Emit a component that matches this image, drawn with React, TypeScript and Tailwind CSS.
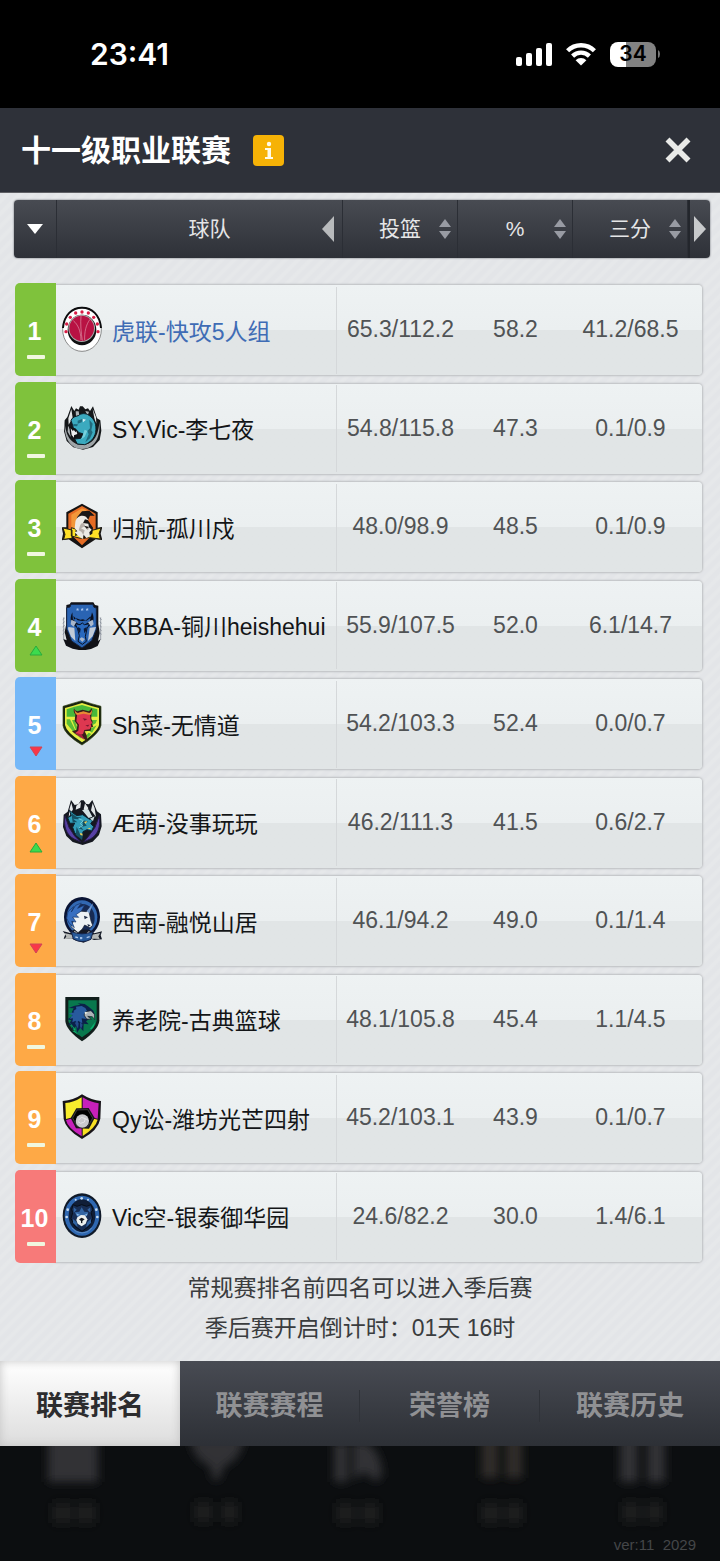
import type { ReactNode } from "react";

type Trend = "same" | "up" | "down";

interface Team {
  rank: number;
  name: string;
  shots: string;
  percent: string;
  threes: string;
  trend: Trend;
  zone: string;
  nameColor: string;
  logo: ReactNode;
}

const green = "bg-[#7fc23c]";
const blue = "bg-[#75b8f8]";
const orange = "bg-[#fea946]";
const red = "bg-[#f77a79]";
const plain = "text-[#131517]";

const basketballLogo = (
  <>
    <ellipse cx="60" cy="70" rx="58" ry="66" fill="#fff" stroke="#555" strokeWidth="2" />
    <path d="M3 66C6 26 31 5 60 5s54 21 57 61" fill="none" stroke="#0c0c0e" strokeWidth="6" />
    <ellipse cx="60" cy="72" rx="43" ry="46" fill="#101012" />
    <ellipse cx="59" cy="67" rx="40" ry="41" fill="#aaa" />
    <ellipse cx="59" cy="67" rx="37" ry="38" fill="#b81243" />
    <g fill="none" stroke="#e095aa" strokeWidth="2">
      <path d="M57 29c-2 24 0 50 4 75M34 44c14 12 22 30 23 58M84 40c-12 16-17 38-16 62" />
    </g>
    <g fill="#d81d45">
      <circle cx="60" cy="18" r="5" /><circle cx="41" cy="21" r="5" /><circle cx="79" cy="21" r="5" />
      <circle cx="25" cy="34" r="5" /><circle cx="95" cy="34" r="5" /><circle cx="14" cy="54" r="5" />
      <circle cx="106" cy="54" r="5" /><circle cx="12" cy="77" r="5" /><circle cx="108" cy="77" r="5" />
    </g>
  </>
);

const dinosaurLogo = (
  <>
    <path d="M28 3 37 18 42 10 50 14 54 4l8 0 8 9 8-3 6 8 9-14 12 36 10 6 3 31-5 28-20 21-30 8-29-7-20-19-8-29 2-33 8-10z" fill="#141719" />
    <path d="M28 12 32 38 20 59 19 40zM92 12l5 28 6 16-1-20z" fill="#e3e6e7" />
    <path d="M8 50c-3 38 10 80 52 82 44-2 56-44 52-82-2 34-13 68-52 70-36-2-50-34-52-70z" fill="#9fa5a8" />
    <path d="M41 19h9l2 12-10 3zM70 18l11 2-4 12zM18 62l6 11 2 23-9-16z" fill="#aeb4b7" />
    <path d="M27 46c4-10 14-12 22-14 8-8 22-8 32-1 16 10 24 28 20 51-4 19-18 32-33 37l-22-2-8-15 18-2 8-13-12-4-18 4-8-13 8-6z" fill="#3baabf" stroke="#0d1c24" strokeWidth="3" />
    <path d="m22 66 18 4 10 10-2 16-16 6-8-18z" fill="#101214" />
    <path d="m26 70 7 9 2-5 6 8 2-4 3 9-10 4 0 7-7-8z" fill="#eee" />
    <path d="m47 47 15-6-3 11-12 4zM82 44l10 12-4 20 4 6-8 18-14 12 10-24-4-10 8-8zM35 57l13 1-3 6-13-1z" fill="#216a7d" />
    <path d="m62 41 10 3-9 8z" fill="#d5eef2" />
    <path d="m68 74 8 4-8 17-10 8z" fill="#77d0dc" />
  </>
);

const warriorLogo = (
  <>
    <path d="M60 2 107 28v46l14-2-5 20 5 19-20-2-41 27-40-27-21 3 4-20-4-19h14V28z" fill="#151313" />
    <path d="M60 9 101 32v54L60 127 19 87V32z" fill="#e66c24" />
    <path d="M60 16 28 35v46l9 18 4-39 11-25 23-13z" fill="#f29739" />
    <path d="m3 75 27 6v25l-25 3 4-15zM117 75l-27 7-18 4-19-4-25-8v25l27 7 28-2 32 4-4-16z" fill="#ffe026" stroke="#242013" strokeWidth="3" />
    <path d="m45 43 15-18 22-2 16 15-14 0-6 14 15 22-2 18-15 9-9 6-11-13-17 5 3-27z" fill="#191717" />
    <path d="M40 57c2-15 18-24 32-16l8 11-11-3-6 11 16 2 2 11 8 7-7 8 2 12-11 5-8-10-3 13-13-9-11-11 8-3-8-9z" fill="#eceae5" />
    <path d="m57 62 8-3 4 10-12 7 11 6-4 14-6-10-8-4 4-14zM73 73l9 4-7 5z" fill="#b6afa9" />
    <path d="m66 68 16 4-8 5z" fill="#1b1715" />
  </>
);

const bullLogo = (
  <>
    <path d="M27 1h67l5 8 10 2v55l4 27-5 24 8-6-9 21-20 9-27 5-28-6-20-9-8-20 10 4-6-25 5-24V9l10-2z" fill="#101116" />
    <path d="M27 7h65l4 9 7 2v64L89 116l-29 22-31-21-15-36V17l10-2z" fill="#2a64b3" stroke="#14213b" strokeWidth="3" />
    <path d="m19 75 18 2 3 40-13-13-9-23zM102 75l-19 2-5 40 14-14 8-22z" fill="#c2cbd7" />
    <path d="M31 31c-10 21-5 37 14 45l5-9-13-10-3-15 13 13 14 2 11-2 14-12-2 15-14 9 5 9c19-9 25-24 15-45l-4 16-12 9-11-4-8 1-12-4-10 5z" fill="#090f1e" />
    <path d="m39 65 15 3 7-5 6 5 16-3-8 15-5 23 3 15-12 9-13-9 4-17-5-20z" fill="#2969be" stroke="#071226" strokeWidth="3" />
    <path d="m28 53 15 7-8 14-9-7zM92 53l-14 8 9 13 8-7zM52 111l7-5 10 5-8 9z" fill="#a9b7cb" />
    <path d="m49 75 7 5-2 14-7-10zM74 75l-9 5 2 14 7-10z" fill="#0b1936" />
    <g fill="#a7c4ee"><path d="m43 20 3 0 1-3 1 3h3l-2 3 1 4-3-2-3 2 0-4zM57 20h3l1-3 1 3h3l-2 3 1 4-3-2-3 2zM72 20h3l1-3 1 3h3l-2 3 1 4-3-2-3 2z" /></g>
    <path d="M5 46v69M116 46v68M2 53l6-5M2 64l6-5M2 75l6-5M2 86l6-5M2 97l6-5M119 53l-6-5M119 64l-6-5M119 75l-6-5M119 86l-6-5M119 97l-6-5" stroke="#777f8b" strokeWidth="2" />
  </>
);

const devilLogo = (
  <>
    <path d="M3 19Q34 9 60 2q27 9 57 17v57q-4 25-57 59Q7 103 3 77z" fill="#18240f" stroke="#34441b" strokeWidth="2" />
    <path d="M9 24Q36 17 60 9q26 9 51 15v51q-4 20-51 52Q13 97 9 75z" fill="#e6ed42" />
    <path d="M14 28Q38 19 60 15q22 6 46 13v22H14z" fill="#47b83a" />
    <path d="M14 58l10 0 24 50-8-5-26-32zM30 60l8 0 20 56-8-6zM90 60l15 0-4 10-14 8zM104 76 90 98 78 90zM80 98l8 4-14 14-6-4z" fill="#59bc36" />
    <path d="M36 25q-3 12 4 18l-2 20 8 12-2 14-14 5q12 12 28 14l18 18-2-20-6-12 18-2 2-10 6-2-4-8 2-6-4-10 0-14q6-8 0-18-2 8-8 10l-18-5-16 5q-8-2-10-9z" fill="#3b1e1a" />
    <path d="M46 40q22-10 38 4l2 16 5 9-5 4 2 6-5 9-16 2-4 12-10 4-14-6 10-8 2-18-8-10z" fill="#de3750" />
    <path d="M38 28q2 10 10 11l16-5 18 5q6-2 7-10 3 10-4 16l-20-4-20 4q-8-5-7-17z" fill="#e88b34" />
    <path d="m62 55 14 2-8 5zM70 76l12-2-4 6z" fill="#7c1830" />
    <path d="m42 98 18 6 8 16-22-14z" fill="#a41f3d" />
  </>
);

const dragonLogo = (
  <>
    <path d="m27 3 11 15 11-2 8-12h8l8 11 8 1 10-13 14 34 12 9 2 36-8 26-19 20-30 10-30-9-19-18-10-27 2-37 12-9z" fill="#151820" />
    <path d="m28 11 5 20-13 24 3-27zM92 12l-5 22 15 20-4-26zM43 20l14-11-2 17-14 6zM69 13l10 14-5 13-9-9z" fill="#e5e8ea" />
    <path d="M9 50c-5 34 4 57 27 70l20 9-18-18-17-26zM112 50c5 34-5 58-27 70l-20 9 15-18 19-26z" fill="#5740a4" stroke="#231b42" strokeWidth="3" />
    <path d="m22 34 22 16 18-3 19 13 12 4-7 10 9 9-6 13-14-4-12 6-3 16-13-2-9-11-6-16 6-13-14 1-7-17 11-6z" fill="#319db8" stroke="#0a2431" strokeWidth="3" />
    <path d="m60 33 20 24 11-4-12-22zM84 59l14-7-5 14z" fill="#d3e1e3" />
    <path d="m28 42 16 12 15 1-11 6-15-2 13 11-14-1zM60 64l19 3-11 4 6 9-17 4 8 10-15-6 13-12zM44 83l9 20 10 5-3 15-19-16z" fill="#155164" />
    <path d="m66 69 10-3-5 8zM53 102l9 2-1 6-6-3 6 14M75 89l9-3 2 4z" fill="#f0ce55" />
    <path d="m50 59 14 6-9 9 7 6-11 6" fill="none" stroke="#75ced9" strokeWidth="3" />
  </>
);

const unicornLogo = (
  <>
    <ellipse cx="60" cy="60" rx="54" ry="60" fill="#0a1434" />
    <ellipse cx="60" cy="61" rx="46" ry="51" fill="#3268b2" />
    <ellipse cx="61" cy="63" rx="37" ry="42" fill="#172a54" />
    <path d="M2 102 24 108 37 97l46 1 14 11 23-6-4 12 4 12-24 2-9-4-22 12-26-7-11-6-23 1 5-13z" fill="#141925" />
    <path d="m6 108 24 5 8-12 9 8-8 16-16-1-15 3 5-9zM115 108l-25 5-9-11-9 8 10 16 16-1 15 1-4-8z" fill="#b6b9b7" />
    <path d="m51 42 22 2 11-8-2 13 5 23 5 13-8 7-16-8-7 12-13 11-21-18 7-16-3-17z" fill="#eef2f5" stroke="#151d2c" strokeWidth="2" />
    <path d="m18 44 17-15-7 16 13-20 17-7-11 16 21-10-10 18-16 11 8 8-18-1 10 15-13-2 8 19-15-13-8-15z" fill="#386fc1" stroke="#173365" strokeWidth="2" />
    <path d="m74 43 20-26-12 32z" fill="#7599cc" />
    <path d="m66 56 12 5-10 6zM76 81l10 4-7 4z" fill="#202c46" />
    <path d="M28 104q31 13 65 0l-6 23q-27 14-53-1z" fill="#275999" stroke="#152449" strokeWidth="3" />
    <path d="m40 120 8 2M57 120v7M54 123h7M74 122l9-3" stroke="#adc9ed" strokeWidth="4" />
  </>
);

const eagleLogo = (
  <>
    <path d="M10 3h102v71Q109 102 60 136 12 102 10 75z" fill="#101e1b" />
    <path d="M19 13h85v61Q101 97 60 124 21 97 19 74z" fill="#08784d" />
    <path d="m30 47 5-10-15-1 18-7 17-3-8-4 21 2 12 8 14 12 5 13-10-3-14 2 11 10-14 10 8 9-15-2-1 23-9-11-10 15-2-20-13 12 1-16-13 2 10-15-12-3 14-8z" fill="#0b2149" />
    <path d="m34 45 9-6-1-7 17-2 11 6 7 12-11 9 7 12-14-2 2 15-13-8-4 16-3-16-10 5 2-12-10 1 9-11-12-4 17-4z" fill="#285a9e" />
    <path d="m72 47 15-3 10 11 1 16-7-9-14-1 11 9-14-1-8-12z" fill="#aeb4b8" stroke="#172026" strokeWidth="2" />
    <path d="m68 47 10 3-9 5z" fill="#f0efe1" />
    <path d="m39 82 5-8 6 8-2 16zM54 77l8 9-5 14-3-9z" fill="#244b8a" />
    <path d="m22 77 17 28-9-1 21 14-16-17 6 1zM100 77 84 99l6 0-17 18 22-24z" fill="#0ab16d" />
  </>
);

const quarteredLogo = (
  <>
    <path d="M60 1q28 18 57 20l-2 53q-6 34-55 61Q11 107 5 75L2 21Q35 19 60 1z" fill="#171318" />
    <path d="M59 10v53L12 75 10 27q25-1 49-17z" fill="#f8ed2d" />
    <path d="M62 10q24 15 48 18l-3 46-45-11zM12 78l47-12v61Q16 101 12 78z" fill="#c720ba" />
    <path d="m62 66 45 11q-6 24-45 49z" fill="#f8df22" />
    <path d="m43 43 37-1 18 30-17 32-39-1-16-31z" fill="#171719" />
    <path d="m45 48 32-1 15 25-15 26-31-1-14-25z" fill="#000" stroke="#534e52" strokeWidth="2" />
    <circle cx="61" cy="81" r="20" fill="#c9c9cc" />
    <path d="m49 79 9-9 12 4-3 10-11 4-8-5m22-9 9 5" fill="none" stroke="#e6e5e9" strokeWidth="3" />
  </>
);

const bearLogo = (
  <>
    <ellipse cx="60" cy="68" rx="58" ry="67" fill="#101a29" />
    <ellipse cx="60" cy="68" rx="52" ry="60" fill="#2e67b1" />
    <ellipse cx="60" cy="68" rx="40" ry="49" fill="#101e38" />
    <path d="m29 50 4-15 12 5 14-5 15 5 13-5 6 16-6 7 5 18-11 24-21 15-21-15-12-23 5-18z" fill="#172d54" stroke="#070e19" strokeWidth="3" />
    <path d="m35 43 9 7-9 9zM85 43l-9 7 9 9zM59 43l8 13 12 2-7 13-13 4-13-4-8-13 14-2zM33 78l11 10 3 14-14-12zM87 78l-11 10-4 14 15-12z" fill="#3264a3" />
    <path d="m46 73 11-7 12 1 7 12-5 13-12 8-12-8-4-11z" fill="#edf0ef" />
    <path d="m51 79 8-5 9 5-7 5v7l-4-1v-6z" fill="#151a23" />
    <path d="m43 61 11 5-9 2zM77 61l-10 5 8 2z" fill="#83b6e8" />
    <g fill="#c6ddf4"><circle cx="59" cy="16" r="4" /><circle cx="41" cy="20" r="3" /><circle cx="78" cy="20" r="3" /><circle cx="17" cy="50" r="4" /><circle cx="103" cy="50" r="4" /><circle cx="14" cy="72" r="4" /><circle cx="106" cy="72" r="4" /></g>
    <path d="m29 104 14 12 17 4 18-4 12-12" fill="none" stroke="#608fc5" strokeWidth="3" />
  </>
);

const teams: Team[] = [
  { rank: 1, name: "虎联-快攻5人组", shots: "65.3/112.2", percent: "58.2", threes: "41.2/68.5", trend: "same", zone: green, nameColor: "text-[#3f6cb5]", logo: basketballLogo },
  { rank: 2, name: "SY.Vic-李七夜", shots: "54.8/115.8", percent: "47.3", threes: "0.1/0.9", trend: "same", zone: green, nameColor: plain, logo: dinosaurLogo },
  { rank: 3, name: "归航-孤川戍", shots: "48.0/98.9", percent: "48.5", threes: "0.1/0.9", trend: "same", zone: green, nameColor: plain, logo: warriorLogo },
  { rank: 4, name: "XBBA-铜川heishehui", shots: "55.9/107.5", percent: "52.0", threes: "6.1/14.7", trend: "up", zone: green, nameColor: plain, logo: bullLogo },
  { rank: 5, name: "Sh菜-无情道", shots: "54.2/103.3", percent: "52.4", threes: "0.0/0.7", trend: "down", zone: blue, nameColor: plain, logo: devilLogo },
  { rank: 6, name: "Æ萌-没事玩玩", shots: "46.2/111.3", percent: "41.5", threes: "0.6/2.7", trend: "up", zone: orange, nameColor: plain, logo: dragonLogo },
  { rank: 7, name: "西南-融悦山居", shots: "46.1/94.2", percent: "49.0", threes: "0.1/1.4", trend: "down", zone: orange, nameColor: plain, logo: unicornLogo },
  { rank: 8, name: "养老院-古典篮球", shots: "48.1/105.8", percent: "45.4", threes: "1.1/4.5", trend: "same", zone: orange, nameColor: plain, logo: eagleLogo },
  { rank: 9, name: "Qy讼-潍坊光芒四射", shots: "45.2/103.1", percent: "43.9", threes: "0.1/0.7", trend: "same", zone: orange, nameColor: plain, logo: quarteredLogo },
  { rank: 10, name: "Vic空-银泰御华园", shots: "24.6/82.2", percent: "30.0", threes: "1.4/6.1", trend: "same", zone: red, nameColor: plain, logo: bearLogo },
];

function StatusBar() {
  return (
    <div className="flex h-[108px] items-center justify-between bg-black pr-[60px] pl-[90px] font-['Inter',sans-serif] text-white">
      <span className="text-[30px] leading-8 font-semibold">23:41</span>
      <div className="flex items-center">
        <svg className="h-6 w-9" viewBox="0 0 36 24" fill="currentColor" aria-hidden="true">
          <rect x="0" y="15" width="6" height="9" rx="2" />
          <rect x="10" y="11" width="6" height="13" rx="2" />
          <rect x="20" y="6" width="6" height="18" rx="2" />
          <rect x="30" y="1" width="6" height="23" rx="2" />
        </svg>
        <svg className="ml-3.5 h-6 w-[30px]" viewBox="0 0 30 24" aria-hidden="true">
          <path d="M1.6 8.8a19 19 0 0 1 26.8 0M6.6 14.1a12 12 0 0 1 16.8 0" fill="none" stroke="currentColor" strokeWidth="4.4" />
          <path d="M15 23.6 9.6 18.2a7.6 7.6 0 0 1 10.8 0z" fill="currentColor" />
        </svg>
        <span className="ml-3.5 flex h-[25px] w-[46px] items-center justify-center rounded-lg bg-linear-to-r from-white from-35% to-[#828282] to-35% text-[21px] leading-6 font-semibold text-black">34</span>
        <svg className="ml-0.5 h-2 w-0.5" viewBox="0 0 2 8" aria-hidden="true"><path d="M0 0q2 1 2 4T0 8z" fill="#777" /></svg>
      </div>
    </div>
  );
}

function TitleBar() {
  return (
    <header className="flex h-[85px] items-center border-b border-[#5f6065] bg-[#2e3139] pr-7 pl-[21px]">
      <h1 className="pt-px text-[30px] leading-10 font-bold text-white">十一级职业联赛</h1>
      <button type="button" aria-label="联赛说明" className="ml-[22px] flex size-[31px] items-center justify-center rounded-[4px] bg-[#f6b206]">
        <svg className="h-[19px] w-3" viewBox="0 0 12 19" fill="#fffbe8" aria-hidden="true">
          <circle cx="6" cy="3" r="2.2" />
          <path d="M2 7h6v9h2v2H2v-2h2.5V9H2z" />
        </svg>
      </button>
      <button type="button" aria-label="关闭" className="ml-auto">
        <svg className="size-7" viewBox="0 0 28 28" aria-hidden="true">
          <path d="M3.5 3.5 24.5 24.5M24.5 3.5 3.5 24.5" stroke="#e9eae8" strokeWidth="5.6" />
        </svg>
      </button>
    </header>
  );
}

function SortHeader({ label }: { label: string }) {
  return (
    <th scope="col" className="h-full w-[115px] border-r border-[#2b2e35] font-normal">
      <button type="button" className="flex size-full items-center justify-end pr-1.5">
        <span className="flex-1 pl-[18px] text-center">{label}</span>
        <svg className="h-5 w-3" viewBox="0 0 12 20" fill="#989ba3" aria-hidden="true">
          <path d="M6 0 12 8H0zM0 12h12l-6 8z" />
        </svg>
      </button>
    </th>
  );
}

function TrendMark({ trend }: { trend: Trend }) {
  if (trend === "same") {
    return <svg role="img" aria-label="持平" className="h-5 w-5" viewBox="0 0 20 20"><rect x="1" y="10" width="18" height="4" rx="1" fill="#f0f7df" /></svg>;
  }
  if (trend === "up") {
    return <svg role="img" aria-label="上升" className="h-5 w-5" viewBox="0 0 20 20"><path d="M10 5 16 14H4z" fill="#3ddb4e" stroke="#2aaa3c" strokeWidth="1" /></svg>;
  }
  return <svg role="img" aria-label="下降" className="h-5 w-5" viewBox="0 0 20 20"><path d="M4 8h12l-6 9z" fill="#fa3648" stroke="#cf4656" strokeWidth="1" /></svg>;
}

function TeamRow({ team }: { team: Team }) {
  return (
    <tr className="flex h-[93px] items-stretch">
      <td className={`z-10 flex w-[41px] shrink-0 flex-col items-center rounded-l-[5px] pt-[34px] text-[25px] leading-7 font-bold text-white ${team.zone}`}>
        <span className="pr-0.5">{team.rank}</span>
        <TrendMark trend={team.trend} />
      </td>
      <td className="mt-[2px] mb-px min-w-0 flex-1 rounded-r-[4px] bg-linear-to-b from-[#eef2f3] via-[#ebeff0] via-50% to-[#e1e5e6] to-50% p-0 shadow-[0_0_2px_1px_#bcbec1]">
        <div className="flex h-full items-center">
          <div className="flex h-[87px] min-w-0 flex-1 items-center border-r border-[#d5d8da] pl-1.5">
            <svg className="h-12 w-10 shrink-0" viewBox="0 0 120 144" aria-hidden="true">{team.logo}</svg>
            <span className={`ml-2.5 whitespace-nowrap pt-[3px] text-[23px] leading-8 ${team.nameColor}`}>{team.name}</span>
          </div>
          <div className="flex pr-[14px] pb-0.5 pl-1.5 text-center text-[23px] leading-8 text-[#505355]">
            <span className="w-[115px]">{team.shots}</span>
            <span className="w-[115px]">{team.percent}</span>
            <span className="w-[115px]">{team.threes}</span>
          </div>
        </div>
      </td>
    </tr>
  );
}

function Standings() {
  return (
    <table className="block pr-2.5 pl-3.5">
      <thead className="block">
        <tr className="flex h-[58px] items-center overflow-hidden rounded-[4px] bg-linear-to-b from-[#484b52] to-[#2e3138] text-[21px] leading-7 text-[#e5e6e7] shadow-[0_0_2px_#555860]">
          <th scope="col" className="h-full w-[43px] shrink-0 border-r border-[#2b2e35]">
            <button type="button" aria-label="选择排名" className="flex size-full items-center justify-center">
              <svg className="h-2.5 w-4" viewBox="0 0 16 10" fill="#fff" aria-hidden="true"><path d="M0 0h16L8 10z" /></svg>
            </button>
          </th>
          <th scope="col" className="h-full min-w-0 flex-1 border-r border-[#2b2e35] font-normal">
            <div className="flex h-full items-center pr-2">
              <span className="flex-1 pl-10 text-center">球队</span>
              <button type="button" aria-label="上一组数据">
                <svg className="h-[26px] w-3" viewBox="0 0 12 26" fill="#b8babc" aria-hidden="true"><path d="M12 0v26L0 13z" /></svg>
              </button>
            </div>
          </th>
          <SortHeader label="投篮" />
          <SortHeader label="%" />
          <SortHeader label="三分" />
          <th scope="col" className="h-full w-[22px] shrink-0 border-l-2 border-[#23262c]">
            <button type="button" aria-label="下一组数据" className="flex size-full items-center justify-center">
              <svg className="h-[26px] w-3" viewBox="0 0 12 26" fill="#c8cacc" aria-hidden="true"><path d="M0 0v26L12 13z" /></svg>
            </button>
          </th>
        </tr>
      </thead>
      <tbody className="mt-[25px] mr-2 ml-px flex min-h-[980px] flex-col justify-between">
        {teams.map((team) => <TeamRow key={team.rank} team={team} />)}
      </tbody>
    </table>
  );
}

const tabs = ["联赛排名", "联赛赛程", "荣誉榜", "联赛历史"];

function TabBar() {
  return (
    <nav aria-label="联赛" className="grid h-[85px] grid-cols-4 bg-linear-to-b from-[#484b53] to-[#2d3036] text-[27px] leading-8 font-bold text-[#909194]">
      {tabs.map((tab, index) => (
        <button
          key={tab}
          type="button"
          aria-current={index === 0 ? "page" : undefined}
          className={index === 0
            ? "bg-linear-to-b from-white to-[#dddddd] pt-1 text-[#2c2c2e] shadow-[inset_0_0_10px_#c4c4c4]"
            : "flex items-center justify-center pt-1"}
        >
          {index === 0 ? tab : (
            <span className={`flex h-8 w-full items-center justify-center ${index < 3 ? "border-r border-[#2f3238]" : ""}`}>{tab}</span>
          )}
        </button>
      ))}
    </nav>
  );
}

function DimmedFooter() {
  return (
    <footer className="relative flex min-h-[115px] flex-1 items-end justify-end overflow-hidden bg-[#0c0e10] pr-6 pb-1.5">
      <svg className="absolute inset-x-0 top-0 h-[115px] w-full" viewBox="0 0 720 115" preserveAspectRatio="none" aria-hidden="true">
        <defs>
          <filter id="soft" x="-10%" y="-20%" width="120%" height="140%"><feGaussianBlur stdDeviation="5" /></filter>
          <filter id="softer" x="-10%" y="-40%" width="120%" height="180%"><feGaussianBlur stdDeviation="6" /></filter>
        </defs>
        <g filter="url(#soft)">
          <g fill="#303335">
            <path d="M48-8h50v44H48zM190-8h54q-3 22-20 28l-5 14h-6l-3-14Q193 14 190-8zM334-4h14v40h-14zM353-4h12q17 8 17 34l-6 6-11-10-12 8z" />
            <path d="M620-8h18v44h-18zM647-8h18v44h-18z" />
          </g>
          <path d="M482-8h16v40h-16zM506-8h16v40h-16z" fill="#302e2c" />
        </g>
        <path filter="url(#softer)" fill="#202224" d="M54 57h17v20H54zM78 57h16v20H78zM196 56h15v20h-15zM223 56h13v20h-13zM338 57h15v20h-15zM363 57h14v20h-14zM483 57h15v20h-15zM507 57h14v20h-14zM624 56h14v20h-14zM648 56h13v20h-13z" />
      </svg>
      <small className="relative whitespace-pre text-[15px] leading-5 text-[#444648]">ver:11  2029</small>
    </footer>
  );
}

export default function App() {
  return (
    <div className="flex min-h-screen flex-col bg-black font-['Liberation_Sans','Noto_Sans_CJK_SC',sans-serif]">
      <StatusBar />
      <TitleBar />
      <main className="bg-[#e4e6e9] bg-[repeating-linear-gradient(135deg,#e3e5e8_0px,#e3e5e8_3px,#e6e8ea_5px,#e6e8ea_7px,#e3e5e8_9px)] pt-[7px] pb-[13px]">
        <Standings />
        <div className="pt-[5px] text-center text-[23px] leading-10 text-[#3a3c3e]">
          <p>常规赛排名前四名可以进入季后赛</p>
          <p>季后赛开启倒计时：01天 16时</p>
        </div>
      </main>
      <TabBar />
      <DimmedFooter />
    </div>
  );
}
